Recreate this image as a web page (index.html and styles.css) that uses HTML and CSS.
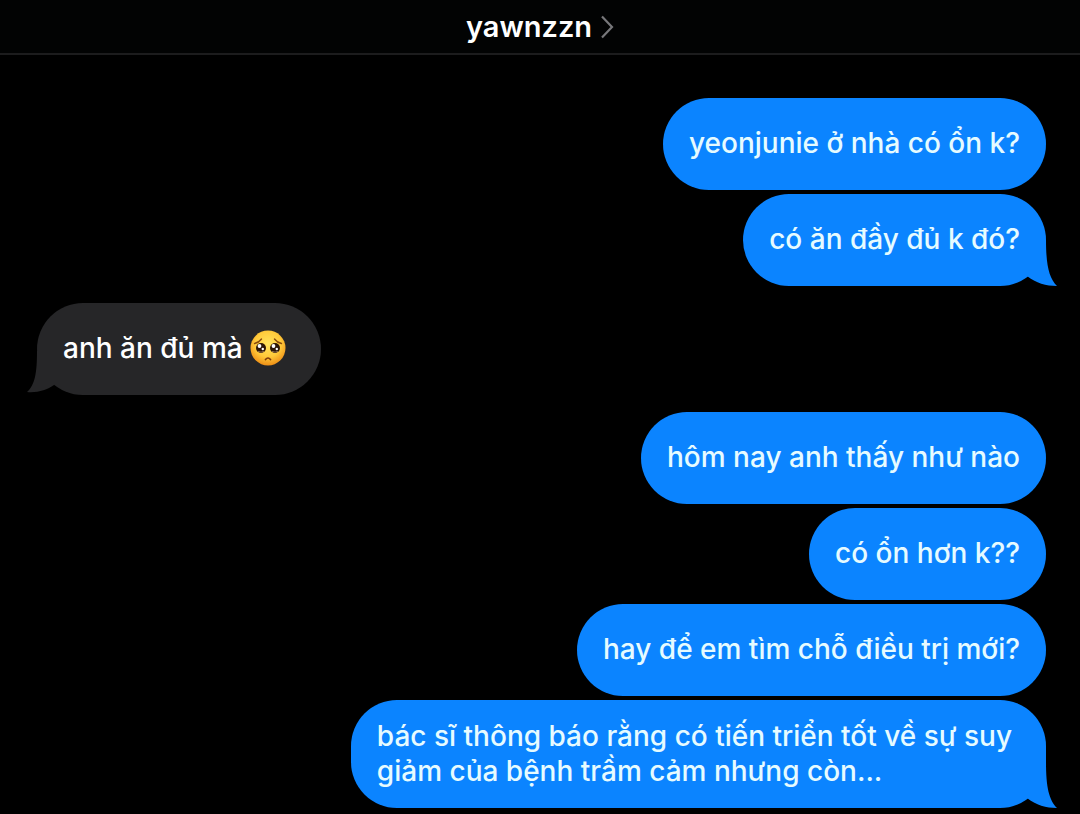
FILE: index.html
```
<!DOCTYPE html>
<html lang="vi">
<head>
    <meta charset="UTF-8">
    <meta name="viewport" content="width=device-width, initial-scale=1.0">
    <title>yawnzzn</title>
    <link rel="stylesheet" href="styles.css">
</head>
<body>
    <header class="chat-header">
        <a class="contact" href="#">
            <span>yawnzzn</span>
            <svg class="chevron" viewBox="0 0 14 24" aria-hidden="true">
                <path d="M2 1.500 12 12 2 22.500" fill="none" stroke="#77777a" stroke-width="2.200"/>
            </svg>
        </a>
    </header>

    <main class="messages">
        <div class="group sent">
            <p class="bubble">yeonjunie ở nhà có ổn k?</p>
            <p class="bubble">có ăn đầy đủ k đó?
                <svg class="tail" viewBox="0 0 30 46" aria-hidden="true">
                    <path d="M0 36C9 43 19 46 30 46C22 38 19 25 19 0H0Z"/>
                </svg>
            </p>
        </div>

        <div class="group received">
            <p class="bubble">anh ăn đủ mà
                <svg class="emoji" viewBox="0 0 36 36" role="img" aria-label="🥺">
                    <defs>
                        <radialGradient id="face" cx="50%" cy="38%" r="62%">
                            <stop offset="0" stop-color="#ffe35c"/>
                            <stop offset="0.6" stop-color="#ffc93a"/>
                            <stop offset="1" stop-color="#ee8f16"/>
                        </radialGradient>
                    </defs>
                    <circle cx="18" cy="18" r="17.500" fill="url(#face)"/>
                    <path d="M4.500 13.500Q9 12.500 11.500 9M31.500 13.500Q27 12.500 24.500 9" fill="none" stroke="#8a4b0c" stroke-width="1.300" stroke-linecap="round"/>
                    <circle cx="11" cy="18" r="5" fill="#2b1505"/>
                    <circle cx="25" cy="18" r="5" fill="#2b1505"/>
                    <circle cx="9.500" cy="16" r="1.900" fill="#fff"/>
                    <circle cx="23.500" cy="16" r="1.900" fill="#fff"/>
                    <circle cx="12.800" cy="19" r="1.200" fill="#fff"/>
                    <circle cx="26.800" cy="19" r="1.200" fill="#fff"/>
                    <path d="M8 21.300q3 1.700 6 0M22 21.300q3 1.700 6 0" fill="none" stroke="#8b6a50" stroke-width="1"/>
                    <path d="M15.500 29.500Q18 26.500 20.500 29.500" fill="none" stroke="#7c3a0b" stroke-width="1.700" stroke-linecap="round"/>
                </svg>
                <svg class="tail" viewBox="0 0 30 46" aria-hidden="true">
                    <path d="M27 38C20 43 10 46 0 45C8 38 10 26 10 4H27Z"/>
                </svg>
            </p>
        </div>

        <div class="group sent">
            <p class="bubble">hôm nay anh thấy như nào</p>
            <p class="bubble">có ổn hơn k??</p>
            <p class="bubble">hay để em tìm chỗ điều trị mới?</p>
            <p class="bubble long">bác sĩ thông báo rằng có tiến triển tốt về sự suy<br>giảm của bệnh trầm cảm nhưng còn...
                <svg class="tail" viewBox="0 0 30 46" aria-hidden="true">
                    <path d="M0 36C9 43 19 46 30 46C22 38 19 25 19 0H0Z"/>
                </svg>
            </p>
        </div>
    </main>
</body>
</html>
```
FILE: styles.css
```
* {
    box-sizing: border-box;
}
body {
    margin: 0;
    background-color: #000;
    color: #fff;
    font-family: Inter, "Noto Sans", sans-serif;
    font-size: 28px;
    font-weight: 500;
    line-height: 35px;
}
.chat-header {
    display: flex;
    justify-content: center;
    padding: 9px 0;
    border-bottom: 2px solid #1c1c1d;
    background-color: #020303;
}
.contact {
    display: flex;
    align-items: center;
    gap: 8px;
    color: #fff;
    font-size: 29px;
    font-weight: 600;
    text-decoration: none;
}
.chevron {
    width: 14px;
    height: 24px;
}
.messages {
    display: flex;
    flex-direction: column;
    gap: 17px;
    padding: 43px 34px 5px 37px;
}
.group {
    display: flex;
    flex-direction: column;
    gap: 4px;
}
.sent {
    align-items: flex-end;
    color: #e6fbff;
}
.received {
    align-items: flex-start;
}
.bubble {
    position: relative;
    margin: 0;
    padding: 28px 26px 29px;
    border-radius: 46px;
}
.long {
    padding: 19px 34px 19px 26px;
}
.sent .bubble {
    background-color: #0b84ff;
}
.received .bubble {
    padding-right: 35px;
    background-color: #262628;
}
.tail {
    position: absolute;
    width: 30px;
    height: 46px;
}
.sent .tail {
    right: -11px;
    bottom: 0;
    fill: #0b84ff;
}
.received .tail {
    left: -10px;
    bottom: 2px;
    fill: #262628;
}
.emoji {
    width: 36px;
    height: 36px;
    margin: -6px 0 -2px;
    vertical-align: middle;
}
```
